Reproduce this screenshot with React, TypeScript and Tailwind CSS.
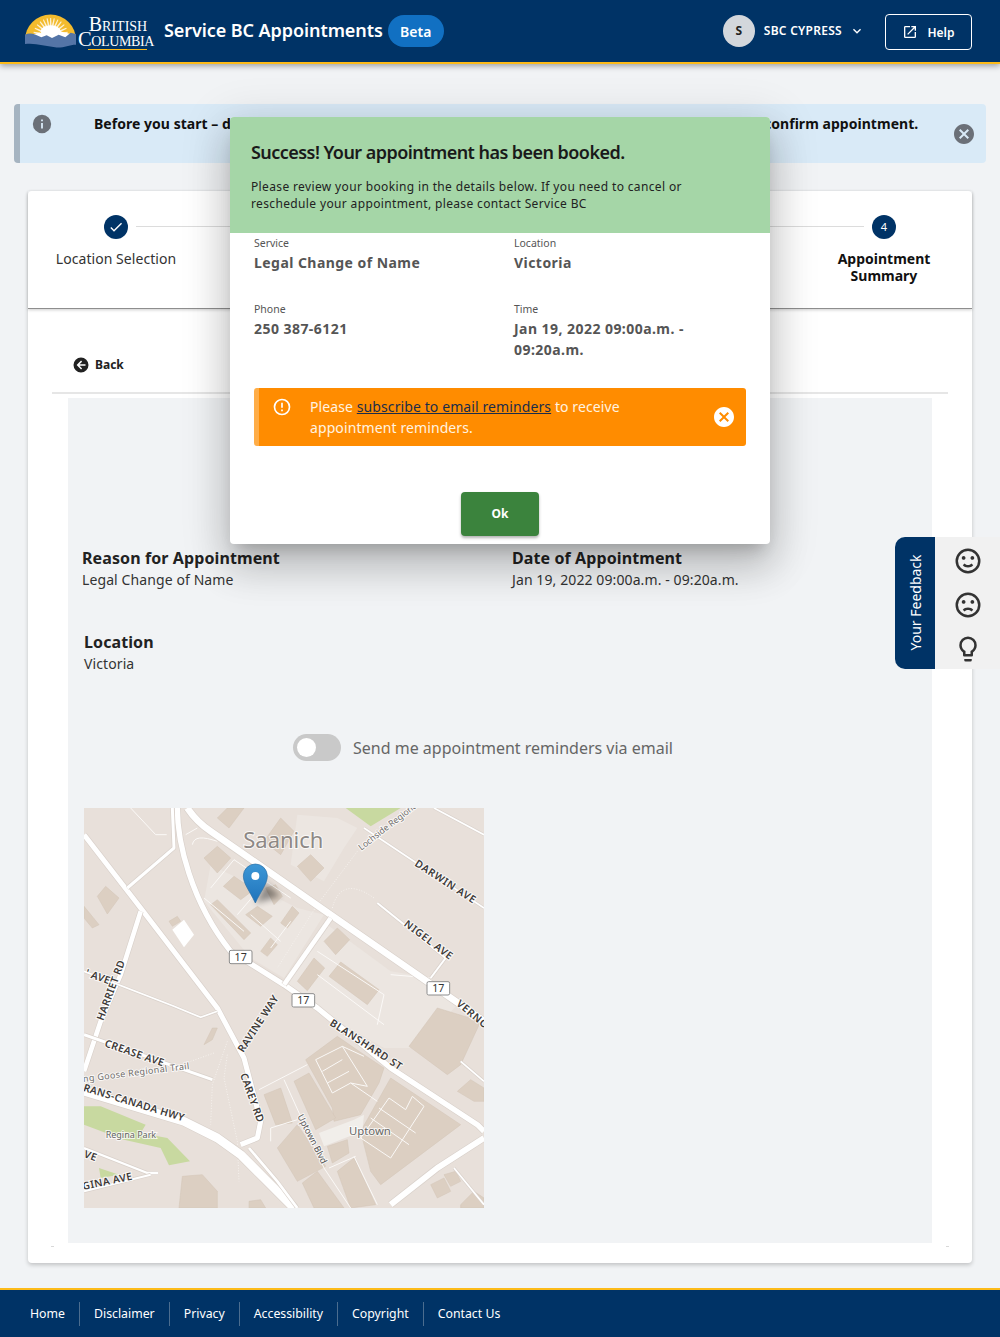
import React from "react";

const P = {
  happy: "M20,12A8,8 0 0,0 12,4A8,8 0 0,0 4,12A8,8 0 0,0 12,20A8,8 0 0,0 20,12M22,12A10,10 0 0,1 12,22A10,10 0 0,1 2,12A10,10 0 0,1 12,2A10,10 0 0,1 22,12M10,9.5C10,10.3 9.3,11 8.5,11C7.7,11 7,10.3 7,9.5C7,8.7 7.7,8 8.5,8C9.3,8 10,8.7 10,9.5M17,9.5C17,10.3 16.3,11 15.5,11C14.7,11 14,10.3 14,9.5C14,8.7 14.7,8 15.5,8C16.3,8 17,8.7 17,9.5M12,17.23C10.25,17.23 8.71,16.5 7.81,15.42L9.23,14C9.68,14.72 10.75,15.23 12,15.23C13.25,15.23 14.32,14.72 14.77,14L16.19,15.42C15.29,16.5 13.75,17.23 12,17.23Z",
  sad: "M20,12A8,8 0 0,0 12,4A8,8 0 0,0 4,12A8,8 0 0,0 12,20A8,8 0 0,0 20,12M22,12A10,10 0 0,1 12,22A10,10 0 0,1 2,12A10,10 0 0,1 12,2A10,10 0 0,1 22,12M15.5,8C16.3,8 17,8.7 17,9.5C17,10.3 16.3,11 15.5,11C14.7,11 14,10.3 14,9.5C14,8.7 14.7,8 15.5,8M10,9.5C10,10.3 9.3,11 8.5,11C7.7,11 7,10.3 7,9.5C7,8.7 7.7,8 8.5,8C9.3,8 10,8.7 10,9.5M12,14C13.75,14 15.29,14.72 16.19,15.81L14.77,17.23C14.32,16.5 13.25,16 12,16C10.75,16 9.68,16.5 9.23,17.23L7.81,15.81C8.71,14.72 10.25,14 12,14Z",
  bulb: "M12,2A7,7 0 0,1 19,9C19,11.38 17.81,13.47 16,14.74V17A1,1 0 0,1 15,18H9A1,1 0 0,1 8,17V14.74C6.19,13.47 5,11.38 5,9A7,7 0 0,1 12,2M9,21V20H15V21A1,1 0 0,1 14,22H10A1,1 0 0,1 9,21M12,4A5,5 0 0,0 7,9C7,11.05 8.23,12.81 10,13.58V16H14V13.58C15.77,12.81 17,11.05 17,9A5,5 0 0,0 12,4Z",
  close: "M12,2C17.53,2 22,6.47 22,12C22,17.53 17.53,22 12,22C6.47,22 2,17.53 2,12C2,6.47 6.47,2 12,2M15.59,7L12,10.59L8.41,7L7,8.41L10.59,12L7,15.59L8.41,17L12,13.41L15.59,17L17,15.59L13.41,12L17,8.41L15.59,7Z",
  alert: "M11,15H13V17H11V15M11,7H13V13H11V7M12,2C6.47,2 2,6.47 2,12A10,10 0 0,0 12,22A10,10 0 0,0 22,12A10,10 0 0,0 12,2M12,20A8,8 0 0,1 4,12A8,8 0 0,1 12,4A8,8 0 0,1 20,12A8,8 0 0,1 12,20Z",
  info: "M13,9H11V7H13M13,17H11V11H13M12,2A10,10 0 0,0 2,12A10,10 0 0,0 12,22A10,10 0 0,0 22,12A10,10 0 0,0 12,2Z",
  back: "M2,12A10,10 0 0,1 12,2A10,10 0 0,1 22,12A10,10 0 0,1 12,22A10,10 0 0,1 2,12M18,11H10L13.5,7.5L12.08,6.08L6.16,12L12.08,17.92L13.5,16.5L10,13H18V11Z",
  open: "M14,3V5H17.59L7.76,14.83L9.17,16.24L19,6.41V10H21V3M19,19H5V5H12V3H5C3.89,3 3,3.9 3,5V19A2,2 0 0,0 5,21H19A2,2 0 0,0 21,19V12H19V19Z",
  check: "M21,7L9,19L3.5,13.5L4.91,12.09L9,16.17L19.59,5.59L21,7Z",
  chevron: "M7.41,8.58L12,13.17L16.59,8.58L18,10L12,16L6,10L7.41,8.58Z",
};

function Mdi({ d, className }: { d: string; className?: string }) {
  return (
    <svg viewBox="0 0 24 24" className={className} fill="currentColor" aria-hidden="true">
      <path d={d} />
    </svg>
  );
}

function BcLogo() {
  const rays = [-80, -66, -52, -38, -25, -12, 0, 12, 25, 38, 52, 66, 80];
  return (
    <svg viewBox="75 45 153 100" className="w-[51px] h-[34px] shrink-0" aria-hidden="true">
      <path d="M75 122 A76 76 0 0 1 228 122 Z" fill="#f3bb2d" />
      {rays.map((r) => (
        <path key={r} d="M148 108 L156 108 L153.5 56 L150.5 56 Z" fill="#fff" opacity="0.8" transform={`rotate(${r} 152 108)`} />
      ))}
      <ellipse cx="152" cy="96" rx="30" ry="18" fill="#fff" />
      <path d="M85 108 L118 100 L132 104 L150 90 L166 104 L180 96 L226 108 L228 122 L76 128 Z" fill="#fff" />
      <path d="M75 106 C92 98 108 106 124 114 L140 108 L156 116 L176 106 L196 114 L212 100 L228 104 L228 136 C205 136 190 147 165 144 C135 140 105 130 75 134 Z" fill="#5475a7" />
    </svg>
  );
}

function Header() {
  return (
    <header className="h-[64px] shrink-0 bg-[#003366] border-b-2 border-[#fcba19] shadow-[0_2px_6px_rgba(0,0,0,0.35)] flex items-center text-white relative z-10">
      <div className="ml-[25px]"><BcLogo /></div>
      <div className="w-[80px] h-[36px] mt-[7px] shrink-0 flex flex-col items-center leading-none font-['Liberation_Serif',serif]">
        <span className="text-[20px] leading-[15px] [font-variant:small-caps] pl-[4px] whitespace-nowrap">British</span>
        <span className="text-[20.5px] leading-[15px] [font-variant:small-caps] whitespace-nowrap tracking-[-0.35px]">Columbia</span>
        <span className="w-[59px] h-px mt-[2px] ml-[2px] bg-[#fcba19]"></span>
      </div>
      <span className="ml-[8px] mb-[2px] text-[18px] font-semibold whitespace-nowrap tracking-[-0.08px]">Service BC Appointments</span>
      <span className="ml-[5px] w-[56px] h-[32px] rounded-full bg-[#1170c2] flex items-center justify-center text-[14px] font-semibold">Beta</span>
      <div className="ml-auto flex items-center">
        <span className="w-[32px] h-[32px] rounded-full bg-[#d3d7dc] text-[#222] flex items-center justify-center text-[12px] font-bold">S</span>
        <span className="ml-[9px] text-[12px] font-semibold whitespace-nowrap tracking-[0.28px]">SBC CYPRESS</span>
        <Mdi d={P.chevron} className="w-[16px] h-[16px] ml-[7px]" />
        <button className="ml-[20px] mr-[28px] mt-[2px] w-[87px] h-[36px] border border-white rounded-[4px] flex items-center justify-center gap-[9px] text-[12px] font-semibold">
          <Mdi d={P.open} className="w-[16px] h-[16px]" />
          <span className="mt-[2px]">Help</span>
        </button>
      </div>
    </header>
  );
}

function Step({ label, active, done, n }: { label: string; active?: boolean; done?: boolean; n: number }) {
  return (
    <div className="w-[176px] shrink-0 flex flex-col items-center pt-[24px] relative z-[1]">
      <span className="w-[24px] h-[24px] rounded-full bg-[#003366] text-white text-[11px] flex items-center justify-center">
        {done ? <Mdi d={P.check} className="w-[16px] h-[16px]" /> : n}
      </span>
      <span className={active ? "mt-[11px] w-[100px] text-center text-[14px] leading-[17px] font-bold text-[#111]" : "mt-[11px] text-center text-[14px] leading-[17px] tracking-[0.05px] whitespace-nowrap text-[#333]"}>{label}</span>
    </div>
  );
}

function Divider() {
  return <div className="flex-1 h-px bg-[#dcdcdc] mt-[35px] -mx-[68px]"></div>;
}

function Stepper() {
  return (
    <div className="h-[118px] flex border-b border-[#8e8e8e] shadow-[0_1px_3px_rgba(0,0,0,0.2)]">
      <Step n={1} done label="Location Selection" />
      <Divider />
      <Step n={2} done label="Select Service" />
      <Divider />
      <Step n={3} done label="Select Date" />
      <Divider />
      <Step n={4} active label="Appointment Summary" />
    </div>
  );
}

function Road({ d, w }: { d: string; w: number }) {
  return (
    <>
      <path d={d} fill="none" stroke="#d9d1cb" strokeWidth={w + 4} strokeLinejoin="round" />
      <path d={d} fill="none" stroke="#ffffff" strokeWidth={w} strokeLinejoin="round" />
    </>
  );
}

function Label({ x, y, r, size, children, bold, fill, anchor, spacing }: { x: number; y: number; r?: number; size: number; children: string; bold?: boolean; fill?: string; anchor?: "start" | "middle" | "end"; spacing?: number }) {
  return (
    <text
      x={x}
      y={y}
      transform={r ? `rotate(${r} ${x} ${y})` : undefined}
      fontSize={size}
      fontFamily="'Noto Sans', sans-serif"
      fontWeight={bold ? 600 : 400}
      fill={fill || "#3d3a38"}
      stroke="#ffffff"
      strokeOpacity="0.75"
      strokeWidth={6}
      paintOrder="stroke"
      textAnchor={anchor || "start"}
      letterSpacing={spacing || 0}
    >
      {children}
    </text>
  );
}

function Shield({ x, y }: { x: number; y: number }) {
  return (
    <g>
      <rect x={x - 34} y={y - 20} width="68" height="40" rx="5" fill="#fff" stroke="#8c8c8c" strokeWidth="3" />
      <text x={x} y={y + 12} fontSize="32" textAnchor="middle" fontFamily="'Noto Sans', sans-serif" fill="#333">17</text>
    </g>
  );
}

const buildings = [
  "360,150 400,115 440,150 400,195",
  "418,235 450,205 510,245 470,275",
  "380,290 400,275 500,375 480,395",
  "485,320 520,295 565,325 530,355",
  "590,345 625,295 645,315 610,360",
  "530,430 560,390 580,410 550,445",
  "545,240 575,230 595,265 570,290",
  "640,175 680,140 720,180 680,220",
  "400,30 430,0 480,0 435,60",
  "540,100 590,30 630,70 590,140",
  "720,400 760,360 797,395 755,440",
  "640,520 690,450 722,480 670,548",
  "735,505 770,462 885,545 850,590",
  "40,265 65,235 105,270 70,318",
  "0,295 45,350 25,360 0,330",
  "255,340 280,325 290,340 265,355",
  "975,715 1060,600 1190,640 1130,770 1090,800",
  "665,755 760,685 840,740 900,780 885,825 830,920 750,940 745,900",
  "630,820 675,795 755,930 695,965",
  "830,970 920,810 1130,950 890,1130 860,1090",
  "540,860 590,840 625,945 575,950",
  "580,1020 640,950 725,1075 640,1120",
  "655,1125 700,1090 780,1200 690,1200",
  "760,1090 810,1050 875,1190 800,1200",
  "730,1015 790,995 795,1035 745,1065",
  "1120,850 1160,815 1200,840 1200,880 1170,880",
  "295,1105 355,1100 400,1150 400,1200 285,1200",
  "495,1180 530,1175 545,1200 495,1200",
  "1040,1130 1080,1110 1100,1150 1060,1170",
  "1080,1100 1115,1090 1130,1120 1100,1135",
  "1130,1190 1170,1150 1200,1170 1200,1200 1130,1200",
  "360,710 385,660 400,660 385,695",
];

function MapView() {
  return (
    <div className="w-[400px] h-[400px] ml-[16px] mt-[47px] overflow-hidden">
      <svg viewBox="0 0 1200 1200" className="w-full h-full block" role="img">
        <defs>
          <linearGradient id="pin" x1="0" y1="0" x2="0" y2="1">
            <stop offset="0" stopColor="#3d97d6" />
            <stop offset="1" stopColor="#1f73bb" />
          </linearGradient>
          <filter id="soft" x="-50%" y="-50%" width="200%" height="200%">
            <feGaussianBlur stdDeviation="9" />
          </filter>
        </defs>
        <rect width="1200" height="1200" fill="#e8e0da" />
        <polygon points="785,0 860,55 950,0" fill="#c8d9a0" />
        <polygon points="0,895 50,895 185,950 170,975 250,990 318,1060 255,1072 230,1020 120,995 0,950" fill="#c8d9a0" />
        <polygon points="45,1080 105,1100 50,1110" fill="#c8d9a0" />
        <polygon points="640,20 760,30 820,60 780,120 720,220 620,170" fill="#ece6e1" />
        <polygon points="380,170 640,300 720,320 600,510 500,450 360,280" fill="#ece6e1" />
        <polygon points="730,350 920,490 1040,510 1120,590 1000,720 900,720 760,640 600,520" fill="#ece6e1" />
        {buildings.map((p) => (
          <polygon key={p} points={p} fill="#dccfc2" stroke="#d3c5b7" strokeWidth="1.5" />
        ))}
        <polygon points="705,975 810,935 840,920 835,970 720,1015" fill="#f1eeea" />
        <polygon points="265,365 300,335 330,380 300,418" fill="#fff" />
        <g fill="none" stroke="#fbf9f7" strokeWidth="3">
          <path d="M140,0 L215,80 L248,80" />
          <path d="M305,80 L340,60 M325,110 C330,85 355,85 400,100" />
          <path d="M695,755 L775,715 L840,745 M695,755 L745,855 M715,790 L775,755 M730,825 L795,790 M745,855 L800,825 L880,880 M775,715 L850,835 L800,825" />
          <path d="M830,990 L915,870 L965,905 L985,865 L1020,895 L920,1050 Z M860,930 L975,1010 M885,900 L995,975" />
          <path d="M525,845 L670,770 M600,815 L720,1080 L800,1200 M560,1000 L560,960 L640,935 M810,1045 L880,1190 M735,1080 L815,1045" />
          <path d="M620,340 L560,420 M460,320 L520,250 M380,240 L450,155 L620,270 M500,320 L590,400 M360,270 L480,370" />
          <path d="M700,430 L900,560 L880,650 M700,500 L900,650 M920,500 L1040,510 L1085,450" />
        </g>
        <g fill="none" stroke="#f6f2ee" strokeWidth="3" strokeDasharray="3 5">
          <path d="M820,130 L700,290 L580,480" />
          <path d="M745,300 C760,240 800,220 870,270" />
          <path d="M390,735 L320,760 M430,700 L385,830 L380,950 M430,740 L420,810 L460,1000 L465,1120" />
        </g>
        <Road d="M0,80 L170,300 L400,600 L480,750 L530,940 L520,990 L470,1010" w={15} />
        <Road d="M170,310 L110,500 L50,640 L0,790" w={14} />
        <Road d="M310,0 C330,30 350,50 380,70 L740,320 L1130,590 L1200,640" w={20} />
        <Road d="M280,0 C280,100 320,280 440,430 L600,530 L700,600 L920,780 L1180,950 L1200,970" w={16} />
        <Road d="M740,330 L600,530" w={14} />
        <Road d="M265,0 L270,120 L130,240" w={9} />
        <Road d="M0,850 L300,940 L400,990 L470,1040 L540,1110 L630,1200" w={26} />
        <Road d="M495,1020 L580,1120 L640,1200" w={8} />
        <Road d="M1200,990 L1060,1080 L920,1190" w={18} />
        <Road d="M0,680 L385,815" w={9} />
        <Road d="M0,1020 L190,1095 L222,1095" w={7} />
        <Road d="M0,1150 L200,1100" w={6} />
        <Road d="M840,60 L1200,300" w={5} />
        <Road d="M1050,0 L1200,80" w={5} />
        <Road d="M880,285 L1085,450 L1040,510" w={6} />
        <Road d="M0,490 L270,595 L350,628 L400,610" w={5} />
        <Road d="M1110,1080 L1200,1190 M1130,760 L1200,820" w={5} />
        <Label x={598} y={120} size={66} anchor="middle" fill="#8d8885">Saanich</Label>
        <Label x={832} y={128} r={-38} size={26} fill="#6f6c6a">Lochside Regional Trail</Label>
        <Label x={990} y={172} r={33} size={31} bold spacing={2}>DARWIN AVE</Label>
        <Label x={958} y={352} r={37} size={31} bold spacing={2}>NIGEL AVE</Label>
        <Label x={58} y={640} r={-70} size={31} bold spacing={1}>HARRIET RD</Label>
        <Label x={2} y={503} r={20} size={31} bold spacing={1}>' AVE</Label>
        <Label x={478} y={735} r={-57} size={31} bold spacing={1}>RAVINE WAY</Label>
        <Label x={468} y={800} r={70} size={31} bold spacing={1}>CAREY RD</Label>
        <Label x={735} y={650} r={33} size={31} bold spacing={2}>BLANSHARD ST</Label>
        <Label x={1115} y={590} r={40} size={31} bold spacing={2}>VERNON AVE</Label>
        <Label x={60} y={715} r={19} size={31} bold spacing={1}>CREASE AVE</Label>
        <Label x={-2} y={822} r={-7} size={27} fill="#6f6c6a" spacing={1}>ng Goose Regional Trail</Label>
        <Label x={-4} y={848} r={17} size={31} bold spacing={1}>RANS-CANADA HWY</Label>
        <Label x={65} y={989} size={27} fill="#666">Regina Park</Label>
        <Label x={795} y={980} size={34} fill="#666">Uptown</Label>
        <Label x={640} y={925} r={63} size={27} fill="#555">Uptown Blvd</Label>
        <Label x={-2} y={1047} r={20} size={31} bold spacing={1}>VE</Label>
        <Label x={-2} y={1146} r={-12} size={31} bold spacing={1}>GINA AVE</Label>
        <Shield x={470} y={447} />
        <Shield x={658} y={577} />
        <Shield x={1063} y={541} />
        <path d="M514,285 L545,225 L590,265 Z" fill="#000" opacity="0.4" filter="url(#soft)" />
        <path d="M514,285 C498,250 478,228 478,204 A36,36 0 0 1 550,204 C550,228 530,250 514,285 Z" fill="url(#pin)" stroke="#2a6ea5" strokeWidth="2" />
        <circle cx="514" cy="204" r="12" fill="#fff" />
      </svg>
    </div>
  );
}

function Main() {
  return (
    <main className="flex-1 flex flex-col">
      <div className="mt-[40px] mx-[14px] h-[59px] rounded-[4px] bg-[#d9eaf7] border-l-[6px] border-[#a6b4c1] flex items-start relative">
        <Mdi d={P.info} className="w-[22px] h-[22px] text-[#6b7078] mt-[9px] ml-[11px] shrink-0" />
        <p className="ml-[41px] mt-[9px] text-[14px] font-bold text-[#111] whitespace-nowrap leading-[22px] tracking-[0.035px]">Before you start – double-check your details and select the right service before you continue to confirm appointment.</p>
        <Mdi d={P.close} className="w-[24px] h-[24px] text-[#6b7078] absolute right-[10px] top-[18px]" />
      </div>
      <section className="relative mt-[28px] mx-[28px] h-[1072px] bg-white rounded-[4px] shadow-[0_2px_4px_rgba(0,0,0,0.2)] flex flex-col">
        <Stepper />
        <div className="mx-[24px] flex-1 flex flex-col">
          <div className="h-[85px] border-b-2 border-[#e6e6e6] flex items-center pt-[28px] pl-[20px]">
            <Mdi d={P.back} className="w-[18px] h-[18px] text-[#222]" />
            <span className="ml-[5px] text-[12px] font-bold text-[#222]">Back</span>
          </div>
          <div className="mt-[4px] mx-[16px] h-[845px] bg-[#f1f3f5] pt-[148px]">
            <div className="flex">
              <div className="w-[430px] pl-[14px]">
                <h3 className="text-[16px] leading-[24px] font-bold tracking-[0.1px] text-[#222]">Reason for Appointment</h3>
                <p className="text-[14px] leading-[20px] tracking-[0.1px] text-[#333]">Legal Change of Name</p>
              </div>
              <div className="pl-[14px]">
                <h3 className="text-[16px] leading-[24px] font-bold tracking-[0.1px] text-[#222]">Date of Appointment</h3>
                <p className="text-[14px] leading-[20px] tracking-[0.1px] text-[#333]">Jan 19, 2022 09:00a.m. - 09:20a.m.</p>
              </div>
            </div>
            <div className="mt-[40px] pl-[16px]">
              <h3 className="text-[16px] leading-[24px] font-bold tracking-[0.1px] text-[#222]">Location</h3>
              <p className="text-[14px] leading-[20px] tracking-[0.1px] text-[#333]">Victoria</p>
            </div>
            <div className="mt-[60px] ml-[225px] flex items-center">
              <span className="w-[48px] h-[27px] rounded-full bg-[#c9c9c9] relative inline-block">
                <span className="absolute left-[4px] top-[4px] w-[19px] h-[19px] rounded-full bg-white"></span>
              </span>
              <span className="ml-[12px] text-[16px] text-[#666]">Send me appointment reminders via email</span>
            </div>
            <MapView />
          </div>
        </div>
        <span className="absolute left-[23px] bottom-[16px] w-[3px] h-px bg-[#d8d8d8]"></span>
        <span className="absolute right-[23px] bottom-[16px] w-[3px] h-px bg-[#d8d8d8]"></span>
      </section>
    </main>
  );
}

function Footer() {
  const links = ["Home", "Disclaimer", "Privacy", "Accessibility", "Copyright", "Contact Us"];
  return (
    <footer className="mt-[25px] h-[49px] shrink-0 bg-[#003366] border-t-2 border-[#fcba19] flex items-center pl-[16px] pt-[1px] text-white">
      {links.map((l, i) => (
        <span key={l} className={`h-[24px] flex items-center px-[14px] text-[12.3px] ${i < links.length - 1 ? "border-r border-[#4b6d8f]" : ""}`}>{l}</span>
      ))}
    </footer>
  );
}

function Field({ label, children }: { label: string; children: React.ReactNode }) {
  return (
    <div>
      <div className="text-[10.5px] leading-[14px] text-[#555]">{label}</div>
      <div className="mt-[2px] text-[14px] leading-[21px] font-bold text-[#555] tracking-[0.45px]">{children}</div>
    </div>
  );
}

function Dialog() {
  return (
    <div className="absolute left-[230px] top-[117px] w-[540px] h-[427px] bg-white rounded-[4px] overflow-hidden shadow-[0_11px_15px_-7px_rgba(0,0,0,0.2),0_24px_38px_3px_rgba(0,0,0,0.14),0_9px_46px_8px_rgba(0,0,0,0.12)] z-20">
      <div className="h-[116px] bg-[#a5d6a7] px-[21px] pt-[22px]">
        <h2 className="text-[18px] leading-[26px] font-semibold tracking-[-0.55px] text-[#1a1a1a]">Success! Your appointment has been booked.</h2>
        <p className="mt-[13px] text-[12px] leading-[17px] tracking-[0.36px] text-[#222] w-[440px]">Please review your booking in the details below. If you need to cancel or reschedule your appointment, please contact Service BC</p>
      </div>
      <div className="px-[24px]">
        <div className="grid grid-cols-[260px_1fr] mt-[3px]">
          <div className="h-[66px]"><Field label="Service">Legal Change of Name</Field></div>
          <Field label="Location">Victoria</Field>
          <Field label="Phone">250 387-6121</Field>
          <Field label="Time">Jan 19, 2022 09:00a.m. -<br />09:20a.m.</Field>
        </div>
        <div className="mt-[28px] h-[58px] bg-[#ff8c00] rounded-[3px] border-l-[5px] border-[#ffad47] flex items-start relative text-white">
          <Mdi d={P.alert} className="w-[20px] h-[20px] mt-[9px] ml-[13px] shrink-0" />
          <p className="ml-[18px] mt-[8px] text-[14px] leading-[21px] text-[#fff3e0] w-[330px] tracking-[0.1px]">
            Please <a className="underline text-[#1a2c4a]">subscribe to email reminders</a> to receive appointment reminders.
          </p>
          <Mdi d={P.close} className="w-[24px] h-[24px] absolute right-[10px] top-[17px]" />
        </div>
        <div className="mt-[46px] flex justify-center">
          <button className="w-[78px] h-[44px] rounded-[4px] bg-[#3b833d] text-white text-[12px] font-bold shadow-[0_2px_3px_rgba(0,0,0,0.3)]">Ok</button>
        </div>
      </div>
    </div>
  );
}

function Feedback() {
  return (
    <aside className="absolute right-0 top-[537px] w-[105px] h-[132px] flex z-10">
      <div className="w-[40px] bg-[#003366] rounded-l-[10px] flex items-center justify-center pb-[2px]">
        <span className="text-white text-[14px] whitespace-nowrap -rotate-90">Your Feedback</span>
      </div>
      <div className="flex-1 bg-[#f1f1f1] flex flex-col items-center justify-between pt-[9px] pb-[5px] text-[#333]">
        <Mdi d={P.happy} className="w-[30px] h-[30px]" />
        <Mdi d={P.sad} className="w-[30px] h-[30px]" />
        <Mdi d={P.bulb} className="w-[30px] h-[30px]" />
      </div>
    </aside>
  );
}

export default function App() {
  return (
    <div className="relative w-[1000px] h-[1337px] overflow-hidden bg-[#f1f3f5] flex flex-col font-['Noto_Sans',sans-serif]">
      <Header />
      <Main />
      <Footer />
      <Feedback />
      <Dialog />
    </div>
  );
}
